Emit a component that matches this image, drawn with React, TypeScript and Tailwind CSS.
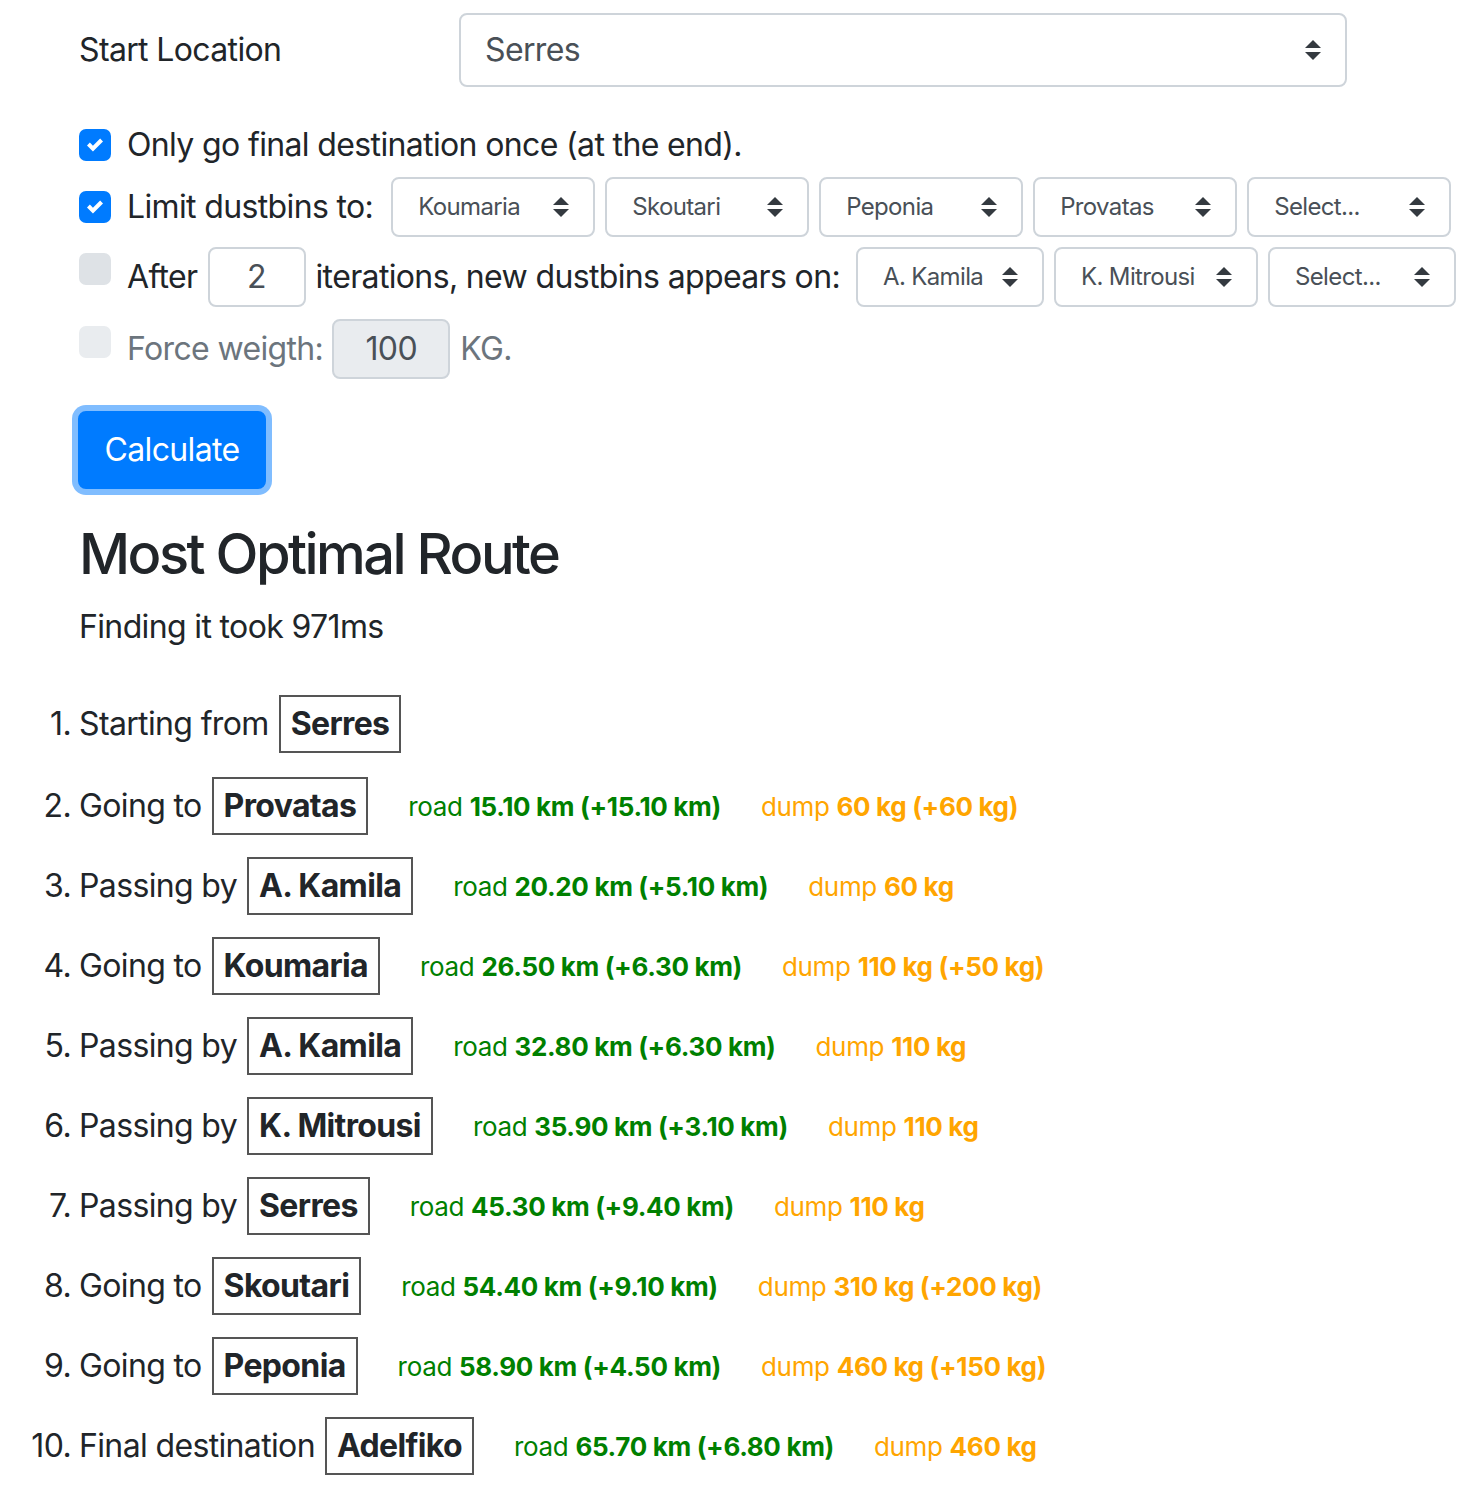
const FONT = "font-['Inter','Noto_Sans',sans-serif]"

function Arrows({ className = '' }: { className?: string }) {
  return (
    <svg width="16" height="20" viewBox="0 0 4 5" className={className}>
      <path d="M2 0L0 2h4zm0 5L0 3h4z" fill="#343a40" />
    </svg>
  )
}

function SmallSelect({ value, width }: { value: string; width: string }) {
  return (
    <div className={`relative flex items-center h-[60px] ${width} shrink-0 border-2 border-[#ced4da] rounded-[8px] bg-white pl-[25px] text-[24px] text-[#495057]`}>
      <span>{value}</span>
      <Arrows className="absolute right-[24px] top-[18px]" />
    </div>
  )
}

function Box({ state }: { state: 'on' | 'off' | 'disabled' }) {
  const bg = state === 'on' ? 'bg-[#007bff]' : state === 'off' ? 'bg-[#dee2e6]' : 'bg-[#e9ecef]'
  return (
    <div className={`w-[32px] h-[32px] rounded-[7px] ${bg} flex items-center justify-center shrink-0`}>
      {state === 'on' && (
        <svg width="16" height="16" viewBox="0 0 8 8">
          <path d="M6.564.75l-3.59 3.612-1.538-1.55L0 4.26 2.974 7.25 8 2.193z" fill="#fff" />
        </svg>
      )}
    </div>
  )
}

const steps = [
  { label: 'Starting from', place: 'Serres' },
  { label: 'Going to', place: 'Provatas', road: '15.10 km (+15.10 km)', dump: '60 kg (+60 kg)' },
  { label: 'Passing by', place: 'A. Kamila', road: '20.20 km (+5.10 km)', dump: '60 kg' },
  { label: 'Going to', place: 'Koumaria', road: '26.50 km (+6.30 km)', dump: '110 kg (+50 kg)' },
  { label: 'Passing by', place: 'A. Kamila', road: '32.80 km (+6.30 km)', dump: '110 kg' },
  { label: 'Passing by', place: 'K. Mitrousi', road: '35.90 km (+3.10 km)', dump: '110 kg' },
  { label: 'Passing by', place: 'Serres', road: '45.30 km (+9.40 km)', dump: '110 kg' },
  { label: 'Going to', place: 'Skoutari', road: '54.40 km (+9.10 km)', dump: '310 kg (+200 kg)' },
  { label: 'Going to', place: 'Peponia', road: '58.90 km (+4.50 km)', dump: '460 kg (+150 kg)' },
  { label: 'Final destination', place: 'Adelfiko', road: '65.70 km (+6.80 km)', dump: '460 kg' },
]

export default function App() {
  return (
    <div className={`${FONT} bg-white text-[#212529] text-[32px] leading-[1.5] tracking-[-0.02em] min-h-[1508px] w-[1482px] pt-[13px]`}>
      <div className="ml-[79px]">
        {/* start location */}
        <div className="flex items-center">
          <div className="w-[380px]">Start Location</div>
          <div className="relative flex items-center w-[888px] h-[74px] border-2 border-[#ced4da] rounded-[8px] pl-[24px] text-[#495057]">
            <span>Serres</span>
            <Arrows className="absolute right-[24px] top-[25px]" />
          </div>
        </div>

        {/* options */}
        <div className="flex items-start mt-[34px] h-[48px]">
          <div className="mt-[8px]"><Box state="on" /></div>
          <span className="ml-[16px]">Only go final destination once (at the end).</span>
        </div>

        <div className="flex items-center mt-[8px] h-[60px]">
          <Box state="on" />
          <span className="ml-[16px] mr-[18px]">Limit dustbins to:</span>
          <div className="flex gap-[10px]">
            <SmallSelect value="Koumaria" width="w-[204px]" />
            <SmallSelect value="Skoutari" width="w-[204px]" />
            <SmallSelect value="Peponia" width="w-[204px]" />
            <SmallSelect value="Provatas" width="w-[204px]" />
            <SmallSelect value="Select..." width="w-[204px]" />
          </div>
        </div>

        <div className="flex items-center mt-[10px] h-[60px]">
          <div className="self-start mt-[6px]"><Box state="off" /></div>
          <span className="ml-[16px]">After</span>
          <div className="ml-[10px] w-[98px] h-[60px] border-2 border-[#ced4da] rounded-[8px] flex items-center justify-center text-[#495057]">2</div>
          <span className="ml-[10px] mr-[16px] whitespace-nowrap">iterations, new dustbins appears on:</span>
          <div className="flex gap-[10px]">
            <SmallSelect value="A. Kamila" width="w-[188px]" />
            <SmallSelect value="K. Mitrousi" width="w-[204px]" />
            <SmallSelect value="Select..." width="w-[188px]" />
          </div>
        </div>

        <div className="flex items-center mt-[12px] h-[60px] text-[#6c757d]">
          <div className="self-start mt-[7px]"><Box state="disabled" /></div>
          <span className="ml-[16px]">Force weigth:</span>
          <div className="ml-[9px] w-[118px] h-[60px] border-2 border-[#ced4da] bg-[#e9ecef] rounded-[8px] flex items-center justify-center text-[#495057]">100</div>
          <span className="ml-[10px]">KG.</span>
        </div>

        <button className="mt-[32px] -ml-px w-[188px] h-[78px] rounded-[8px] bg-[#007bff] text-white border-2 border-[#007bff] ring-[6px] ring-[#80bdff]">
          Calculate
        </button>

        <h3 className="mt-[32px] text-[56px] font-medium leading-[1.2] tracking-[-0.045em]">Most Optimal Route</h3>
        <p className="mt-[15px]">Finding it took 971ms</p>
      </div>

      <ol className="mt-[30px]">
        {steps.map((s, i) => (
          <li key={i} className="flex items-center h-[80px] first:h-[85px]">
            <span className="w-[71px] text-right shrink-0">{i + 1}.</span>
            <span className="ml-[8px] whitespace-nowrap">{s.label}</span>
            <span className="ml-[10px] border-2 border-[#555] px-[10px] py-[3px] font-bold whitespace-nowrap">{s.place}</span>
            {s.road && (
              <span className="ml-[40px] text-[26px] tracking-[-0.013em] text-[#008000] whitespace-nowrap">
                road <b>{s.road}</b>
              </span>
            )}
            {s.dump && (
              <span className="ml-[40px] text-[26px] tracking-[-0.013em] text-[#ffa500] whitespace-nowrap">
                dump <b>{s.dump}</b>
              </span>
            )}
          </li>
        ))}
      </ol>
    </div>
  )
}
